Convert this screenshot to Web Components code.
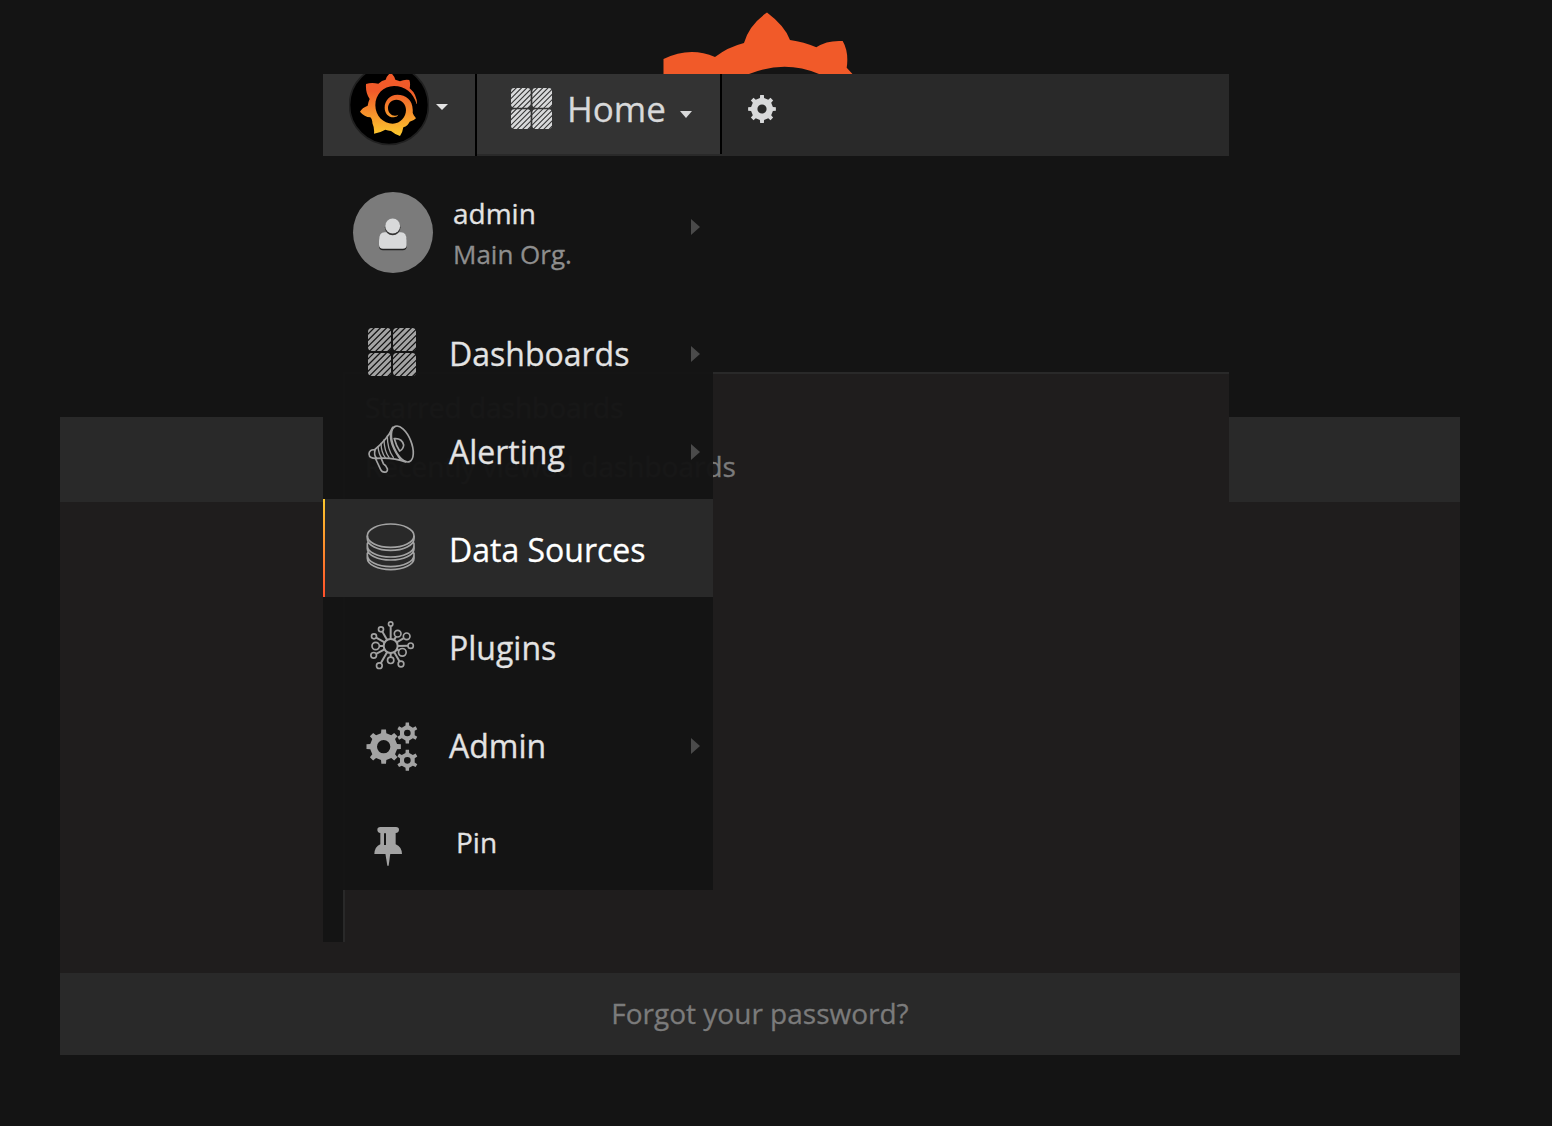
<!DOCTYPE html>
<html lang="en">
<head>
<meta charset="utf-8">
<title>Grafana</title>
<style>
html,body{margin:0;height:100%}
body{background:#141414;font-family:"Open Sans","Noto Sans",sans-serif;overflow:hidden;color:#e3e3e3;-webkit-text-stroke:.3px currentColor}
</style>
</head>
<body>
<login-page></login-page>
<app-window>
  <nav-bar slot="nav"></nav-bar>
  <dash-panel slot="panel"></dash-panel>
  <side-menu slot="menu">
    <user-entry name="admin" org="Main Org."></user-entry>
    <menu-item icon="dash" arrow>Dashboards</menu-item>
    <menu-item icon="alert" arrow>Alerting</menu-item>
    <menu-item icon="data" active>Data Sources</menu-item>
    <menu-item icon="plug">Plugins</menu-item>
    <menu-item icon="admin" arrow>Admin</menu-item>
    <menu-item icon="pin" small>Pin</menu-item>
  </side-menu>
</app-window>
<script>
function define(name, render) {
  customElements.define(name, class extends HTMLElement {
    connectedCallback() {
      if (!this.shadowRoot) this.attachShadow({mode: 'open'}).innerHTML = render(this);
    }
  });
}

// Closed outline of a toothed wheel with a round hole.
function gear(cx, cy, n, R, r, hole, wo, wi) {
  const p = [], step = 2 * Math.PI / n;
  const pt = (a, q) => (cx + q * Math.sin(a)).toFixed(2) + ',' + (cy - q * Math.cos(a)).toFixed(2);
  for (let i = 0; i < n; i++) {
    const a = i * step;
    p.push(pt(a - step * wi, r), pt(a - step * wo, R), pt(a + step * wo, R), pt(a + step * wi, r));
  }
  return `<path fill-rule="evenodd" stroke-linejoin="round" d="M${p.join('L')}ZM${cx - hole},${cy}a${hole},${hole} 0 1 0 ${2 * hole},0a${hole},${hole} 0 1 0 ${-2 * hole},0Z"/>`;
}
const nodes = [[152,72,6.5],[123,88,7.5],[102,109,7.5],[107,138,11],[101,166,8.5],[118,197,8.5],[152,181,9.5],[183,192,8.5],[187,157,11.5],[212,137,8],[200,109,10],[173,101,10]];
function plug() {
  let s = '<g fill="none" stroke="currentColor" stroke-width="6"><circle cx="152" cy="138" r="21"/>';
  for (const [x, y, r] of nodes) {
    const dx = x - 152, dy = y - 138, d = Math.hypot(dx, dy);
    s += `<circle cx="${x}" cy="${y}" r="${r}" stroke-width="5"/><path d="M${152 + dx / d * 21},${138 + dy / d * 21}L${x - dx / d * r},${y - dy / d * r}"/>`;
  }
  return s + '</g>';
}
// Four rounded tiles filled with diagonal bars.
function tiles() {
  let d = '';
  for (let c = 3; c < 98; c += 6.2) d += `M${c + 1},-1L-1,${c + 1}`;
  return `<defs><clipPath id="t"><rect width="23" height="23" rx="4"/><rect x="25" width="23" height="23" rx="4"/><rect y="25" width="23" height="23" rx="4"/><rect x="25" y="25" width="23" height="23" rx="4"/></clipPath></defs>
  <g clip-path="url(#t)"><path d="${d}" stroke="currentColor" stroke-width="3.15" fill="none"/></g>`;
}
const icons = {
  home: ['0 0 48 48', tiles()],
  dash: ['-6 -6 60 60', tiles()],
  alert: ['126 330 180 180', `<g fill="none" stroke="currentColor" stroke-width="5" stroke-linecap="round">
    <ellipse cx="247" cy="402" rx="27" ry="57" transform="rotate(-22 247 402)"/>
    <path d="M218,352Q204,386 163,420M168,445Q220,441 257,456M213,366Q205,400 244,452M223,386Q246,384 251,405Q250,418 239,423Q229,408 223,386Z"/>
    <path stroke-width="4" d="M202,378Q202,418 220,442M192,390Q193,424 207,442M183,400Q184,428 196,443M174,410Q176,432 185,444"/>
    <path d="M165,420C154,417 147,424 147,432C147,442 157,446 170,445Q161,436 165,420ZM167,447L182,479C187,490 205,489 202,476Q199,466 190,461L184,446"/></g>`],
  data: ['126 84 180 180', `<g fill="none" stroke="currentColor" stroke-width="5"><ellipse cx="212" cy="137" rx="70" ry="35"/>
    <path d="M142,137V146A70,35 0 0 0 282,146V137M144,157Q141,160 142,167A70,34 0 0 0 282,167Q283,160 280,157M142,167V176A70,34 0 0 0 282,176V167M144,187Q141,190 142,196A70,34 0 0 0 282,196Q283,190 280,187M142,196V205A70,34 0 0 0 282,205V196"/></g>`],
  plug: ['66 48 180 180', plug()],
  admin: ['66 42 180 180', `<g fill="currentColor">${gear(131,140,8,52,41,20,.17,.25)}${gear(202,99,6,32,23,10,.15,.23)}${gear(202,181,6,32,23,10,.15,.23)}</g>`],
  pin: ['66 336 180 180', `<g fill="currentColor"><path fill-rule="evenodd" d="M121,381H168Q177,381 177,389Q177,398 167,399V433Q185,440 186,462H103Q104,440 121,433V399Q112,398 112,389Q112,381 121,381ZM132,400V435H138V400Z"/><path d="M136,460H151L146,497H142Z"/></g>`],
  cog: ['0 0 28 28', `<g fill="currentColor">${gear(14,14,8,14,11.1,4.6,.17,.24)}</g>`],
  user: ['178 114 84 98', `<path fill="#222" d="M178,185Q178,160 195,160H244Q261,160 261,185V198Q261,211 249,211H190Q178,211 178,198Z"/><path fill="#d8d9da" d="M178,182Q178,157 195,157H244Q261,157 261,182V195Q261,206 249,206H190Q178,206 178,195Z"/><circle cx="219" cy="142" r="23.5" fill="#333"/><circle cx="219" cy="138" r="22.5" fill="#d8d9da"/>`],
  logo: ['87 24 240 215', `<defs><linearGradient id="g" gradientUnits="userSpaceOnUse" x1="0" y1="75" x2="0" y2="210"><stop stop-color="#f15a29"/><stop offset="1" stop-color="#fcca2e"/></linearGradient></defs>
    <circle cx="207" cy="117" r="118.5" fill="#000" stroke="#202020" stroke-width="5"/>
    <path fill="url(#g)" d="M212,20Q222,28 226,41L240,46Q252,40 268,42Q272,52 269,67Q291,85 291,115L278,138Q279,148 288,157Q281,165 269,167Q264,179 250,184Q248,199 240,210Q226,206 213,195Q204,193 196,191Q181,200 162,203Q164,187 157,171Q158,160 151,154Q133,153 120,137Q126,125 143,119Q145,107 149,99Q136,80 138,54Q154,48 175,53Q186,43 197,41Q201,28 212,20Z"/>
    <path fill="#000" d="M290,114C280,80 255,60 222,60C190,60 166,85 166,118C166,150 190,173 218,173C242,173 258,152 258,132C258,114 245,101 229,101C214,101 204,113 204,126C204,140 214,149 225,149Q230,149 235,146Q233,152 222,154C206,155 194,142 194,125C194,103 210,86 232,86C258,86 278,103 278,130L279,144L298,140L296,114Z"/>`]
};
define('ui-icon', el => {
  const [box, art] = icons[el.getAttribute('name')];
  return `<style>:host{display:block;flex:none}svg{display:block;width:100%;height:100%}</style><svg viewBox="${box}" aria-hidden="true">${art}</svg>`;
});
define('ui-caret', el => `<style>:host{display:block;flex:none}svg{display:block;width:100%;height:100%}</style>
  <svg viewBox="0 0 12 12" preserveAspectRatio="none"><path fill="currentColor" d="${el.getAttribute('dir') === 'down' ? 'M0,0H12L6,12Z' : 'M0,0L12,6L0,12Z'}"/></svg>`);

define('login-page', () => `<style>
  :host{display:flex;flex-direction:column;padding:0 92px 0 60px}
  .brand{height:417px}
  .brand svg{display:block;margin-left:600px}
  .head{height:85px;background:#292929}
  .body{height:471px;background:#1f1d1d}
  .foot{box-sizing:border-box;height:82px;padding-bottom:2px;background:#292929;display:flex;align-items:center;justify-content:center;color:#7b7b7b;font-size:28px;line-height:38px}
  </style>
  <div class="brand"><svg width="200" height="90" viewBox="660 0 200 90"><path fill="#f15a29" d="M663.5,80V59Q690,46 715,57Q728,47 744,43Q749,25 767,12.5Q785,26 790,40Q804,42 816.3,47.3Q827,40 842.7,41Q849,52 846.7,67.7L858,80H819V74Q785,59.5 749,74V80Z"/></svg></div>
  <div class="head"></div><div class="body"></div><div class="foot"><span>Forgot your password?</span></div>`);

define('app-window', () => `<style>
  :host{position:absolute;left:323px;top:74px;width:906px;height:868px;display:flex;flex-direction:column;background:#141414;overflow:hidden}
  .main{flex:1;display:grid;grid-template:1fr/1fr;min-height:0}
  .panel,.menu{grid-area:1/1;display:grid;min-height:0}
  .panel{padding:216px 0 0 20px}
  .menu{align-self:start;justify-self:start;z-index:1}
  </style><slot name="nav"></slot><div class="main"><div class="panel"><slot name="panel"></slot></div><div class="menu"><slot name="menu"></slot></div></div>`);

define('nav-bar', () => `<style>
  :host{display:flex;height:82px;background:#292929;color:#d8d9da;overflow:hidden}
  .brand{box-sizing:border-box;width:154px;background:#333;border-right:2px solid #000;display:flex;padding-left:26px}
  .brand ui-icon{width:80px;height:71.7px}
  .brand ui-caret{width:12px;height:6px;margin:30px 0 0 7px;color:#e3e3e3}
  .home{box-sizing:border-box;width:245px;height:80px;background:#333;border-right:2px solid #000;display:flex;padding-left:34px}
  .home ui-icon{width:41px;height:41px;margin-top:14px}
  .home span{font-size:35px;line-height:50px;margin:10px 0 0 15px;width:98px;white-space:nowrap}
  .home ui-caret{width:12px;height:7px;margin:37px 0 0 15px}
  .cog{width:28px;height:28px;margin:21px 0 0 26px}
  </style>
  <div class="brand"><ui-icon name="logo"></ui-icon><ui-caret dir="down"></ui-caret></div>
  <div class="home"><ui-icon name="home"></ui-icon><span>Home</span><ui-caret dir="down"></ui-caret></div>
  <ui-icon class="cog" name="cog"></ui-icon>`);

define('dash-panel', () => `<style>
  :host{display:block;background:#1f1d1d;border:solid #292929;border-width:2px 0 0 2px;color:#7b7b7b;font-size:28px;line-height:38px;padding:14px 0 0 20px}
  div{margin-bottom:21px}
  </style><div>Starred dashboards</div><div>Recently viewed dashboards</div>`);

define('side-menu', () => `<style>:host{display:flex;flex-direction:column;width:390px;height:734px;background:rgba(20,20,20,.975)}</style><slot></slot>`);

define('user-entry', el => `<style>
  :host{display:flex;height:147px;flex:none}
  .av{width:80px;height:81px;border-radius:50%;background:#7b7b7b;margin:36px 0 0 30px;display:flex;justify-content:center}
  .av ui-icon{width:28px;height:32.7px;margin-top:26px}
  .t{margin:37px 0 0 20px;width:238px}
  .n{font-size:28px;line-height:40px}.o{font-size:26px;line-height:41px;padding-top:1px;color:#8e8e8e}
  ui-caret{width:9px;height:16px;margin-top:63px;color:#4a4a4a}
  </style><div class="av"><ui-icon name="user"></ui-icon></div><div class="t"><div class="n">${el.getAttribute('name')}</div><div class="o">${el.getAttribute('org')}</div></div><ui-caret></ui-caret>`);

define('menu-item', el => `<style>
  :host{box-sizing:border-box;display:flex;align-items:center;height:98px;flex:none;padding-left:39px;font-size:32px;line-height:44px;color:#e3e3e3}
  :host([active]){color:#fff;background:linear-gradient(#fcc82e,#ff4f2a) left/2px 100% no-repeat,#292929}
  :host([small]){font-size:28px;height:97px}
  ui-icon{width:60px;height:60px;color:#a3a3a3}
  .l{width:242px;margin-left:27px;padding-top:3px}
  :host([small]) .l{margin-left:34px;padding-top:1px}
  ui-caret{width:9px;height:16px;margin-top:4px;color:#4a4a4a}
  </style><ui-icon name="${el.getAttribute('icon')}"></ui-icon><div class="l"><slot></slot></div>${el.hasAttribute('arrow') ? '<ui-caret></ui-caret>' : ''}`);
</script>
</body>
</html>
